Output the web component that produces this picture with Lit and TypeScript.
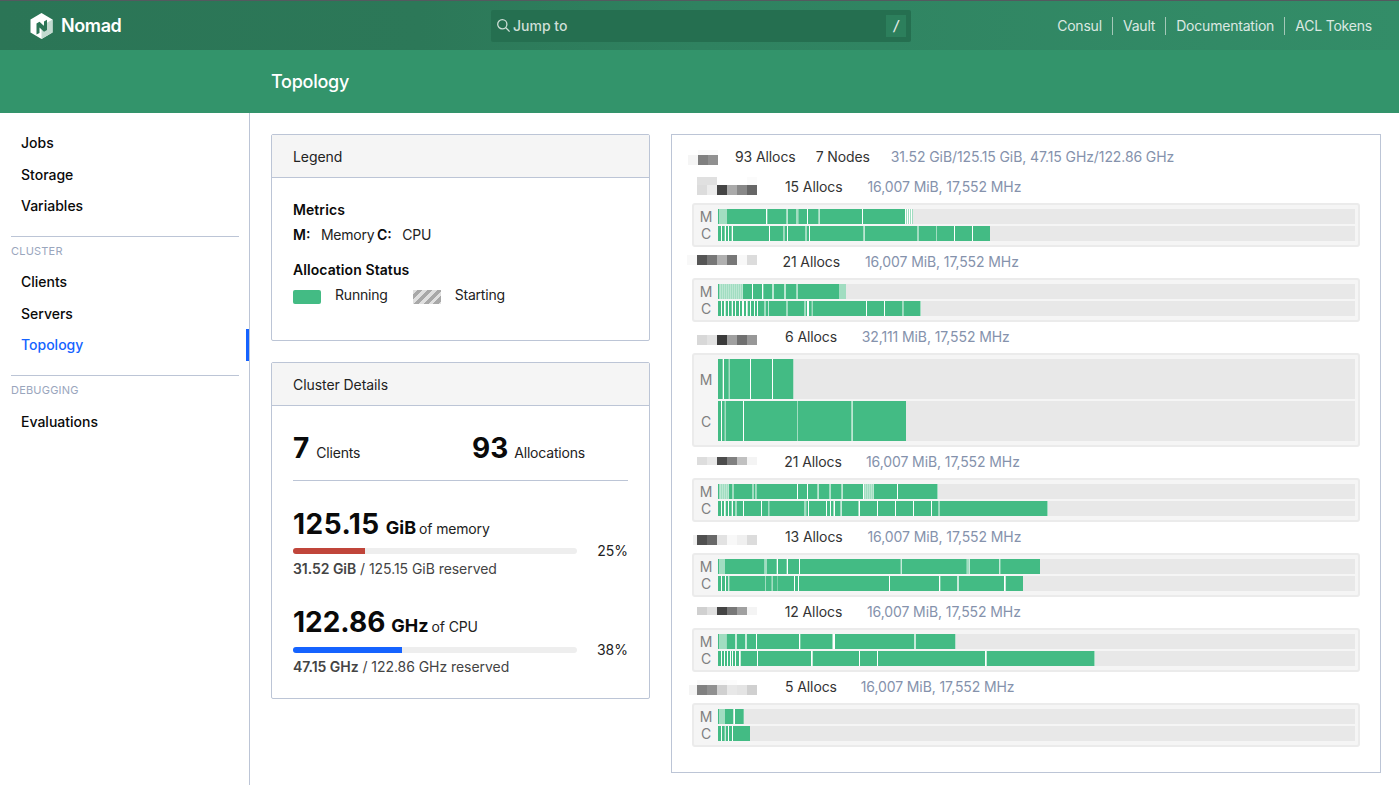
import { LitElement, html, css, svg } from "lit";
import { customElement } from "lit/decorators.js";

interface Pix { x: number; y: number; h: number; c: string[] }
interface Node {
  alloc: string; meta: string; ax: number; mx: number; tall?: boolean;
  pix: Pix[]; m: string; c: string;
}

const NODES: Node[] = [
  { alloc: "15 Allocs", meta: "16,007 MiB, 17,552 MHz", ax: 785, mx: 867.5,
    pix: [{ x: 697, y: 0, h: 8, c: ["e0", "e0", "ff", "ff", "ff", "fb"] }, { x: 697, y: 8, h: 10, c: ["dc", "ec", "44", "aa", "88", "66"] }],
    m: "0-1 1-9f 9-48 49.3-68 68-69.7f 70-78 78-80f 80.3-89 90-100.3 100.3-101.7f 102-144 145-187 188-189f 190-191f 192-193f 194-195f",
    c: "0-3 4-6.7 8-10 11-13.7 15-51 52-65 65-66.7f 66.7-69 70-87 87-89f 89-91 92-145 145-146.7f 147-199 199-201f 201-218 218-219f 219-236 237-254 255-272" },
  { alloc: "21 Allocs", meta: "16,007 MiB, 17,552 MHz", ax: 782.5, mx: 865,
    pix: [{ x: 687, y: 3, h: 10, c: ["f8", "55", "77", "b0", "77", "f8", "dc"] }],
    m: "0-1 1-24~ 25-34 35-44 45.3-54 54.3-55.7f 56-66 66.3-67.7f 68-78 78-79.3f 79.7-121 121-128f",
    c: "0-3 4-6 7.7-10 11-13.7 15-17 18-21 22-24 26-28 29.7-32 33-36 37-39 40-46 46-48f 48-50.3 51-68 68-70f 70-86 86-88f 88-89 91-93.7 93.7-95f 95-148 149-166 167-184 184-185.7f 185.7-202 202-203f" },
  { alloc: "6 Allocs", meta: "32,111 MiB, 17,552 MHz", ax: 785, mx: 861.7, tall: true,
    pix: [{ x: 697, y: 8, h: 10, c: ["d8", "e2", "3a", "a0", "70", "98"] }],
    m: "0-4.7 6-10.7 10.7-12f 12-32 33-54 55-75.3",
    c: "0-3 4-6.7 6.7-8f 8-25 26-79 79-80f 80-133 133-134.7f 135-188" },
  { alloc: "21 Allocs", meta: "16,007 MiB, 17,552 MHz", ax: 784.3, mx: 866,
    pix: [{ x: 697, y: 5, h: 8, c: ["dd", "e8", "4c", "80", "c0", "f4"] }],
    m: "0-1 1-11~ 11-14 14-16f 16-34 34-36f 36-37 37-38.7f 38.7-79 80-89 90-99 99-100.7f 101-111 111-112.3f 112.7-123 123-124.7f 125-145 146-156~ 156-179 180-219 219-220f",
    c: "0-3 4-6 7.7-10 11-13.7 15-17 17-19f 19-25 26-43 44-50 50-51f 51.3-86 86-88.3f 88.3-90 91-108 109-112 113-115 115-116f 117-122 122-123f 123.7-140 140-141f 142-159 160-177 178-195 196-213 214-220.3 220.3-222f 222-329 329-330f" },
  { alloc: "13 Allocs", meta: "16,007 MiB, 17,552 MHz", ax: 785, mx: 867.5,
    pix: [{ x: 693, y: 8, h: 10, c: ["f0"] }, { x: 697, y: 8, h: 10, c: ["50", "68", "e2", "f8", "f0", "dc"] }],
    m: "0-1 1-7f 7-46.3 46.3-48f 48-49f 49-58.7 60-68.7 70-81 82-182.7 183.7-248.7 249-251f 251.7-281.3 282.3-322",
    c: "0-3 4-7 8-10.3 11.3-47 47-48f 48-53.7 54-55f 55-59 59.3-76 77-80 81-171 172-221 222.3-239.3 240.7-286 287.7-305" },
  { alloc: "12 Allocs", meta: "16,007 MiB, 17,552 MHz", ax: 784.7, mx: 867,
    pix: [{ x: 697, y: 5, h: 8, c: ["d0", "e0", "44", "78", "a0", "f4"] }],
    m: "0-1 1-8.7f 8.7-17.3 18.7-27.3 28.7-38 39-81 82.3-114 114-115f 117-196.3 197.7-237.3",
    c: "0-3 4-6 7-9 10-12 13-14 15-17 18-21 22.7-39 40-93 94.7-141 142-159 160-267 268.7-376 376-377f" },
  { alloc: "5 Allocs", meta: "16,007 MiB, 17,552 MHz", ax: 785, mx: 860.7,
    pix: [{ x: 697, y: 3, h: 5, c: ["fa", "fa", "fa", "fc"] }, { x: 689, y: 8, h: 10, c: ["f4"] }, { x: 697, y: 8, h: 10, c: ["80", "90", "d0", "e8", "e4", "d0"] }],
    m: "0-1 1-7f 7-15.3 17-25.7",
    c: "0-3 4-6.7 7.7-10 11-14 15-32" },
];

const SUMMARY_PIX: Pix[] = [
  { x: 698, y: 3, h: 5, c: ["fa", "fa"] },
  { x: 688, y: 8, h: 10, c: ["f5", "80", "90"] },
];

const BAR_W = 637;
const GREEN = "#43bb84";

function segs(data: string) {
  const out: { x: number; w: number; f: boolean }[] = [];
  for (const tok of data.split(" ")) {
    const mode = tok.slice(-1);
    const [a, b] = tok.replace(/[f~]$/, "").split("-").map(Number);
    if (mode === "~") {
      for (let x = a; x < b; x += 2) out.push({ x, w: 1.7, f: true });
    } else {
      out.push({ x: a, w: b - a, f: mode === "f" });
    }
  }
  return out;
}

@customElement("app-root")
export class AppRoot extends LitElement {
  static styles = css`
    :host { display: block; font-family: Inter, "Noto Sans", sans-serif; font-size: 14px; line-height: 21px; color: #0a0a0a; min-height: 100vh; background: #fff; }
    * { box-sizing: border-box; }
    .top { height: 50px; border-top: 1px solid #54595f; display: flex; align-items: center; background: linear-gradient(90deg, #2b7556 0%, #2c7858 30%, #2f8260 50%, #338d68 100%); }
    .brand { width: 491px; display: flex; align-items: center; padding-left: 30px; gap: 8px; color: #fff; font-size: 18px; font-weight: 600; letter-spacing: -0.4px; }
    .search { width: 420px; height: 32px; border-radius: 2px; background: #256f50; display: flex; align-items: center; padding: 0 5px; color: #cfdfd7; font-weight: 500; gap: 2px; }
    .search span { flex: 1; }
    .slash { flex: none; width: 20px; height: 22px; background: #2c7f5c; display: flex; align-items: center; justify-content: center; color: #e3ece8; font-style: italic; }
    .links { flex: 1; display: flex; justify-content: flex-end; padding-right: 17px; color: #dbe8e2; font-size: 14px; letter-spacing: -0.2px; }
    .links a { padding: 0 10px; border-left: 1px solid #a4c8b8; line-height: 18px; }
    .links a:first-child { border-left: 0; }
    .sub { height: 63px; background: #33946b; color: #fff; font-size: 18px; font-weight: 500; letter-spacing: -0.25px; padding-left: 271px; display: flex; align-items: center; }
    .body { display: flex; min-height: 672px; }
    .side { width: 250px; flex: none; border-right: 1px solid #bcc5d6; padding: 13.95px 10px 0 11px; position: relative; }
    .item { display: block; padding: 5.25px 10px; font-weight: 500; color: #0a0a0a; }
    .item.on { color: #1563ff; }
    .marker { position: absolute; right: 0; top: 216px; width: 3px; height: 32px; background: #1563ff; }
    .rule { height: 1px; background: #bcc5d6; margin: 14.55px 0 6px; }
    .rule.r2 { margin-top: 14.25px; }
    .group { font-size: 11px; line-height: 16px; color: #9aa6bd; letter-spacing: 0.2px; margin-bottom: 7px; }
    .group.g2 { margin-bottom: 8px; }
    .main { flex: 1; display: flex; padding: 21px 18px 12px 21px; gap: 21px; align-items: flex-start; }
    .left { width: 379px; flex: none; display: flex; flex-direction: column; gap: 21px; }
    .card { border: 1px solid #bcc5d6; border-radius: 2px; }
    .head { height: 43px; background: #f5f5f5; border-bottom: 1px solid #bcc5d6; padding: 0 21px; display: flex; align-items: center; color: #222; letter-spacing: -0.07px; }
    .legend { height: 207px; }
    .lb { padding: 21px 21px 0; color: #222; }
    .lb b { font-weight: 600; color: #0a0a0a; }
    .lb span { letter-spacing: -0.2px; }
    .lt { font-weight: 600; color: #0a0a0a; margin-bottom: 4px; letter-spacing: 0.08px; }
    .lrow { display: flex; align-items: center; height: 21px; }
    .lrow b { margin-right: 10.5px; }
    .lrow .g { margin-right: 2.5px; }
    .as { margin-top: 14px; }
    .swatch { width: 28px; height: 14px; border-radius: 2px; margin: 4px 14px 0 0; }
    .run { background: #43bb84; }
    .start { background: repeating-linear-gradient(135deg, #e0e0e0 0 3px, #a8a8a8 3px 7px); border-radius: 0; }
    .rtxt { margin-right: 25px; }
    .stats { padding: 0 21px; }
    .counts { display: flex; height: 75px; border-bottom: 1px solid #bcc5d6; align-items: flex-end; padding-bottom: 15px; color: #222; }
    .counts > div { flex: none; width: 179px; display: flex; align-items: baseline; gap: 7px; letter-spacing: -0.2px; }
    .counts > div + div { width: 156px; gap: 6px; }
    .big { font-size: 28px; line-height: 34px; font-weight: 700; color: #0a0a0a; letter-spacing: 0; }
    .wide { letter-spacing: 0.5px; }
    .metric { margin-top: 26px; color: #222; }
    .metric.m2 { margin-top: 26px; padding-bottom: 21px; }
    .mt { display: flex; align-items: baseline; height: 34px; letter-spacing: -0.15px; }
    .mt b { font-size: 18px; font-weight: 700; margin: 0 3px 0 6px; color: #0a0a0a; letter-spacing: 0; }
    .pr { display: flex; align-items: center; height: 21px; margin-top: -1px; justify-content: space-between; }
    .m2 .pr { margin-top: 0; }
    .track { width: 284px; height: 6px; border-radius: 3px; background: #eee; overflow: hidden; }
    .fill { height: 6px; }
    .red { background: #c0453a; }
    .blue { background: #1563ff; }
    .res { color: #444; line-height: 21px; margin-top: -3px; letter-spacing: -0.05px; }
    .m2 .res { margin-top: -4px; }
    .res b { font-weight: 600; }
    .panel { width: 710px; height: 639px; flex: none; border: 1px solid #bcc5d6; padding: 12px 20px 0; }
    .hdr { display: flex; align-items: center; height: 20px; white-space: nowrap; color: #333; letter-spacing: -0.1px; }
    .hdr svg { flex: none; margin-left: -12px; display: block; }
    .hdr span { flex: none; margin-top: -2px; }
    .muted { color: #8592ac; }
    .sum { margin-bottom: 10px; }
    .node { margin-bottom: 5px; }
    .box { margin-top: 6px; border: 2px solid #ebebeb; border-radius: 3px; background: #f5f5f5; padding: 4px 3px 4px 0; display: flex; flex-direction: column; gap: 2px; width: 668px; }
    .row { display: flex; align-items: center; }
    .lab { width: 24px; text-align: center; color: #808080; font-size: 14px; line-height: 14px; }
    .lab.t { padding-top: 2px; }
    .row svg { display: block; }
  `;

  private pix(p: Pix[], w: number) {
    return html`<svg width=${w} height="20" viewBox="680 0 ${w} 20">
      ${p.map(r => r.c.map((c, i) => svg`<rect x=${r.x + i * 10} y=${r.y} width="10" height=${r.h} fill="#${c}${c}${c}"></rect>`))}
    </svg>`;
  }

  private bar(data: string, h: number) {
    const s = segs(data);
    const end = Math.max(...s.map(x => x.x + x.w));
    return html`<svg width=${BAR_W} height=${h} viewBox="0 0 ${BAR_W} ${h}">
      <rect width=${BAR_W} height=${h} fill="#e8e8e8"></rect>
      <rect width=${end} height=${h} fill="#fff"></rect>
      ${s.map(g => svg`<rect x=${g.x} width=${g.w} height=${h} fill=${GREEN} fill-opacity=${g.f ? 0.5 : 1}></rect>`)}
    </svg>`;
  }

  render() {
    return html`
      <div class="top">
        <div class="brand">
          <svg width="23" height="26" viewBox="0 0 23 26">
            <polygon points="11.5,0 22.5,6.4 22.5,19.4 11.5,26 0.5,19.4 0.5,6.4" fill="#fff"></polygon>
            <polygon points="11.5,13 22.5,6.4 22.5,19.4 11.5,26" fill="#c3dad0"></polygon>
            <polygon points="6.5,10.5 9.5,8.8 14,13 14,8.6 17,6.8 17,17 14,18.8 9.5,14.4 9.5,20 6.5,21.6" fill="#2b7556"></polygon>
          </svg>
          <span>Nomad</span>
        </div>
        <div class="search">
          <svg width="15" height="15" viewBox="0 0 15 15" fill="none" stroke="#cfdfd7" stroke-width="1.3"><circle cx="6.3" cy="6.3" r="4.6"></circle><path d="M9.8 9.8 13.6 13.6"></path></svg>
          <span>Jump to</span>
          <div class="slash">/</div>
        </div>
        <div class="links"><a>Consul</a><a>Vault</a><a>Documentation</a><a>ACL Tokens</a></div>
      </div>
      <div class="sub">Topology</div>
      <div class="body">
        <div class="side">
          <a class="item">Jobs</a><a class="item">Storage</a><a class="item">Variables</a>
          <div class="rule"></div>
          <div class="group">CLUSTER</div>
          <a class="item">Clients</a><a class="item">Servers</a><a class="item on">Topology</a>
          <div class="marker"></div>
          <div class="rule r2"></div>
          <div class="group g2">DEBUGGING</div>
          <a class="item">Evaluations</a>
        </div>
        <div class="main">
          <div class="left">
            <div class="card legend">
              <div class="head">Legend</div>
              <div class="lb">
                <div class="lt">Metrics</div>
                <div class="lrow"><b>M:</b><span class="g">Memory</span><b>C:</b><span>CPU</span></div>
                <div class="lt as">Allocation Status</div>
                <div class="lrow">
                  <div class="swatch run"></div><span class="rtxt">Running</span>
                  <div class="swatch start"></div><span>Starting</span>
                </div>
              </div>
            </div>
            <div class="card">
              <div class="head">Cluster Details</div>
              <div class="stats">
                <div class="counts">
                  <div><span class="big">7</span><span>Clients</span></div>
                  <div><span class="big">93</span><span>Allocations</span></div>
                </div>
                <div class="metric">
                  <div class="mt"><span class="big wide">125.15</span><b>GiB</b><span>of memory</span></div>
                  <div class="pr"><div class="track"><div class="fill red" style="width:25.3%"></div></div><span>25%</span></div>
                  <div class="res"><b>31.52 GiB</b> / 125.15 GiB reserved</div>
                </div>
                <div class="metric m2">
                  <div class="mt"><span class="big">122.86</span><b>GHz</b><span>of CPU</span></div>
                  <div class="pr"><div class="track"><div class="fill blue" style="width:38.4%"></div></div><span>38%</span></div>
                  <div class="res"><b>47.15 GHz</b> / 122.86 GHz reserved</div>
                </div>
              </div>
            </div>
          </div>
          <div class="panel">
            <div class="hdr sum">
              ${this.pix(SUMMARY_PIX, 55)}
              <span style="width:80.7px">93 Allocs</span>
              <span style="width:75px">7 Nodes</span>
              <span class="muted">31.52 GiB/125.15 GiB, 47.15 GHz/122.86 GHz</span>
            </div>
            ${NODES.map(n => {
              const h = n.tall ? 40 : 15;
              return html`<div class="node">
                <div class="hdr">
                  ${this.pix(n.pix, n.ax - 680)}
                  <span style="width:${n.mx - n.ax}px">${n.alloc}</span>
                  <span class="muted">${n.meta}</span>
                </div>
                <div class="box">
                  <div class="row"><div class="lab ${n.tall ? "t" : ""}">M</div>${this.bar(n.m, h)}</div>
                  <div class="row"><div class="lab ${n.tall ? "t" : ""}">C</div>${this.bar(n.c, h)}</div>
                </div>
              </div>`;
            })}
          </div>
        </div>
      </div>
    `;
  }
}
